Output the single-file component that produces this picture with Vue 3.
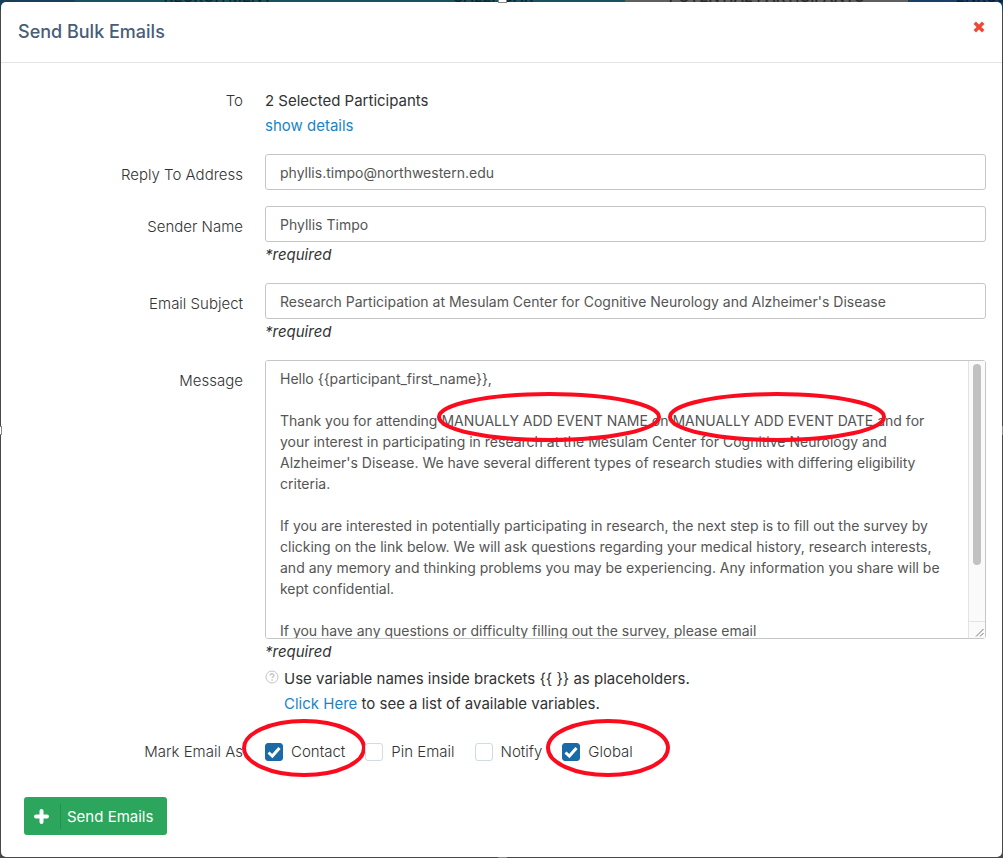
<script setup>
import { ref } from 'vue'

const tabs = ['RECRUITMENT', 'CALENDAR', 'POTENTIAL PARTICIPANTS', 'ENROLLED']
const handles = ['top', 'right', 'bottom', 'left']
const replyTo = ref('phyllis.timpo@northwestern.edu')
const sender = ref('Phyllis Timpo')
const subject = ref("Research Participation at Mesulam Center for Cognitive Neurology and Alzheimer's Disease")
const message = ref(`Hello {{participant_first_name}},

Thank you for attending MANUALLY ADD EVENT NAME on MANUALLY ADD EVENT DATE and for your interest in participating in research at the Mesulam Center for Cognitive Neurology and Alzheimer's Disease. We have several different types of research studies with differing eligibility criteria.

If you are interested in potentially participating in research, the next step is to fill out the survey by clicking on the link below. We will ask questions regarding your medical history, research interests, and any memory and thinking problems you may be experiencing. Any information you share will be kept confidential.

If you have any questions or difficulty filling out the survey, please email`)
const marks = ref([
  { id: 'contact', label: 'Contact', checked: true },
  { id: 'pin', label: 'Pin Email', checked: false },
  { id: 'notify', label: 'Notify', checked: false },
  { id: 'global', label: 'Global', checked: true },
])
</script>

<template>
  <div class="page">
    <nav class="tabs" aria-hidden="true">
      <span v-for="tab in tabs" :key="tab" class="tab"><b>{{ tab }}</b></span>
    </nav>
    <form class="modal" @submit.prevent>
      <header class="header">
        <h1>Send Bulk Emails</h1>
        <button type="button" class="close" aria-label="Close">
          <svg viewBox="0 0 12 12" width="12" height="12">
            <path d="M3 3L9 9M9 3L3 9" stroke="#ef4836" stroke-width="3.4" stroke-linecap="square" />
          </svg>
        </button>
      </header>

      <div class="body">
        <div class="row">
          <span class="label">To</span>
          <div>
            <div>2 Selected Participants</div>
            <a href="#">show details</a>
          </div>
        </div>
        <div class="row">
          <label class="label" for="reply">Reply To Address</label>
          <input id="reply" v-model="replyTo" class="text" type="text">
        </div>
        <div class="row">
          <label class="label" for="sender">Sender Name</label>
          <div>
            <input id="sender" v-model="sender" class="text" type="text">
            <em class="required">*required</em>
          </div>
        </div>
        <div class="row">
          <label class="label" for="subject">Email Subject</label>
          <div>
            <input id="subject" v-model="subject" class="text" type="text">
            <em class="required">*required</em>
          </div>
        </div>
        <div class="row">
          <label class="label" for="message">Message</label>
          <div>
            <div class="message">
              <textarea id="message" v-model="message" spellcheck="false"></textarea>
              <div class="scrollbar" aria-hidden="true">
                <div class="track"><div class="thumb"></div></div>
                <svg class="grip" width="16" height="16" viewBox="0 0 16 16"><path d="M7 14.500L14.500 7M11 14.500L14.500 11" /></svg>
              </div>
              <svg class="ring ring-name" width="224" height="50" viewBox="0 0 224 50"><ellipse cx="112" cy="25" rx="110" ry="23" /></svg>
              <svg class="ring ring-date" width="218" height="50" viewBox="0 0 218 50"><ellipse cx="109" cy="25" rx="107" ry="23" /></svg>
            </div>
            <em class="required">*required</em>
            <div class="help">
              <svg width="14" height="14" viewBox="0 0 14 14" fill="none" stroke="#c4c4c4">
                <circle cx="7" cy="7" r="6" />
                <path d="M5.2 5.6c0-2.4 3.7-2.3 3.7-.2 0 1.300-1.800 1.300-1.800 2.700" stroke-width="1.400" />
                <path d="M7.100 9.300v1.500" stroke-width="1.500" />
              </svg>
              <div>
                <div v-pre>Use variable names inside brackets {{ }} as placeholders.</div>
                <div><a href="#">Click Here</a> to see a list of available variables.</div>
              </div>
            </div>
          </div>
        </div>
        <div class="row marks-row">
          <span id="marks-label" class="label">Mark Email As</span>
          <div class="marks" role="group" aria-labelledby="marks-label">
            <label v-for="mark in marks" :key="mark.id" class="mark">
              <input v-model="mark.checked" type="checkbox">
              <svg v-if="mark.checked" class="tick" width="18" height="18" viewBox="0 0 18 18"><path d="M3.500 9.500L7.300 13L14.500 5" /></svg>
              <span>{{ mark.label }}</span>
              <svg v-if="mark.checked" class="ring" :class="'ring-' + mark.id" width="124" height="58" viewBox="0 0 124 58"><ellipse cx="62" cy="29" rx="60" ry="27" /></svg>
            </label>
          </div>
        </div>
      </div>

      <footer class="footer">
        <button type="submit" class="send">
          <svg width="15" height="15" viewBox="0 0 15 15"><path d="M7.500 2v11M2 7.500h11" stroke="#fff" stroke-width="4" stroke-linecap="round" /></svg>
          <span>Send Emails</span>
        </button>
      </footer>
    </form>
    <i v-for="side in handles" :key="side" class="handle" :class="side"></i>
  </div>
</template>

<style>
body {
  background: #48484a;
}
</style>

<style scoped>
.page {
  box-sizing: border-box;
  min-height: 100vh;
  padding: 2px 1px 1px;
  position: relative;
  overflow: hidden;
  font-family: Inter, "Liberation Sans", sans-serif;
  font-size: 15px;
  line-height: 25px;
  color: #333;
}
.tabs {
  position: absolute;
  inset: 0 0 auto;
  height: 10px;
  display: grid;
  grid-template-columns: 75px 286px 264px 283px 1fr;
  overflow: hidden;
  font-size: 15px;
  background: #173f5c;
}
.tab {
  display: flex;
  justify-content: center;
  align-items: flex-end;
  background: #1b5061;
  color: #0d2530;
  height: 2px;
}
.tab b {
  font-weight: 500;
  line-height: 10px;
}
.tab:first-child {
  grid-column: 2;
}
.tab:nth-child(3) {
  background: #5f5f5f;
  color: #282828;
}
.tab:nth-child(4) {
  justify-content: flex-start;
  padding-left: 48px;
  background: #193f69;
  color: #0d1e33;
}
.modal {
  box-sizing: border-box;
  min-height: calc(100vh - 3px);
  position: relative;
  background: #fff;
  border-radius: 5px;
}
.header {
  display: flex;
  justify-content: space-between;
  align-items: flex-start;
  padding: 17px 17px 18px;
  border-bottom: 1px solid #e5e5e5;
}
h1 {
  margin: 0;
  color: #485d76;
  font-size: 18px;
  font-weight: 500;
  line-height: 25px;
}
.close {
  display: flex;
  margin-top: 2px;
  padding: 0;
  border: 0;
  background: none;
}
.body {
  display: flex;
  flex-direction: column;
  gap: 16px;
  padding: 25px 16px 0;
}
.row {
  display: grid;
  grid-template-columns: 226px minmax(0, 1fr);
  column-gap: 22px;
}
.label {
  padding-top: 8px;
  text-align: right;
  font-weight: 300;
}
.row:first-child .label,
.marks-row .label {
  padding-top: 0;
}
a {
  color: #1c84c6;
  text-decoration: none;
}
.text,
textarea {
  display: block;
  box-sizing: border-box;
  width: 100%;
  border: 1px solid #c6c6c6;
  border-radius: 3px;
  background: #fff;
  color: #555;
  font: 14px/21px Inter, "Liberation Sans", sans-serif;
}
.text {
  height: 36px;
  padding: 0 14px;
}
.required {
  display: block;
}
.message {
  position: relative;
}
textarea {
  height: 279px;
  padding: 7px 45px 80px 14px;
  resize: none;
  scrollbar-width: none;
}
.scrollbar {
  position: absolute;
  inset: 1px 1px 1px auto;
  width: 16px;
  display: flex;
  flex-direction: column;
  border-left: 1px solid #e3e3e3;
  background: #fafafa;
  pointer-events: none;
}
.track {
  flex: 1;
  padding: 3px 4px;
  border-bottom: 1px solid #e3e3e3;
}
.thumb {
  height: 79%;
  border-radius: 4px;
  background: #c1c1c1;
}
.grip {
  fill: none;
  stroke: #777;
}
.ring {
  position: absolute;
  pointer-events: none;
  fill: none;
  stroke: #fb0b1e;
  stroke-width: 4px;
}
.ring-name {
  left: 172px;
  top: 32px;
}
.ring-date {
  left: 403px;
  top: 32px;
}
.help {
  display: flex;
  gap: 5px;
  padding-top: 2px;
}
.help svg {
  margin-top: 4px;
}
.marks-row {
  padding-top: 7px;
}
.marks {
  display: flex;
  align-items: center;
  font-weight: 300;
}
.mark {
  position: relative;
  display: flex;
  align-items: center;
  gap: 8px;
  margin-right: 20px;
}
.mark input {
  appearance: none;
  width: 18px;
  height: 18px;
  margin: 0;
  border: 1px solid #d0dcdf;
  border-radius: 3px;
  background: #fff;
}
.mark input:checked {
  border-color: #1a6aa8;
  background: #1a6aa8;
}
.tick {
  position: absolute;
  left: 0;
  fill: none;
  stroke: #fff;
  stroke-width: 3px;
}
.ring-contact {
  left: -23px;
  top: -20px;
}
.ring-global {
  left: -16px;
  top: -20px;
}
.footer {
  padding: 33px 23px 22px;
}
.send {
  display: flex;
  align-items: center;
  height: 38px;
  padding: 0 14px 0 10px;
  border: 0;
  border-radius: 3px;
  background: #2ca55d;
  color: #fff;
  font: 15px/25px Inter, "Liberation Sans", sans-serif;
}
.send span {
  margin-left: 11px;
  padding-left: 6px;
  border-left: 1px solid #26914f;
}
.handle {
  position: absolute;
  width: 7px;
  height: 7px;
  background: #fff;
  border: 1px solid #888;
}
.top,
.bottom {
  left: calc(50% - 4px);
}
.left,
.right {
  top: calc(50% - 3px);
}
.top {
  top: -6px;
}
.bottom {
  bottom: -8px;
}
.left {
  left: -7px;
}
.right {
  right: -8px;
}
</style>
